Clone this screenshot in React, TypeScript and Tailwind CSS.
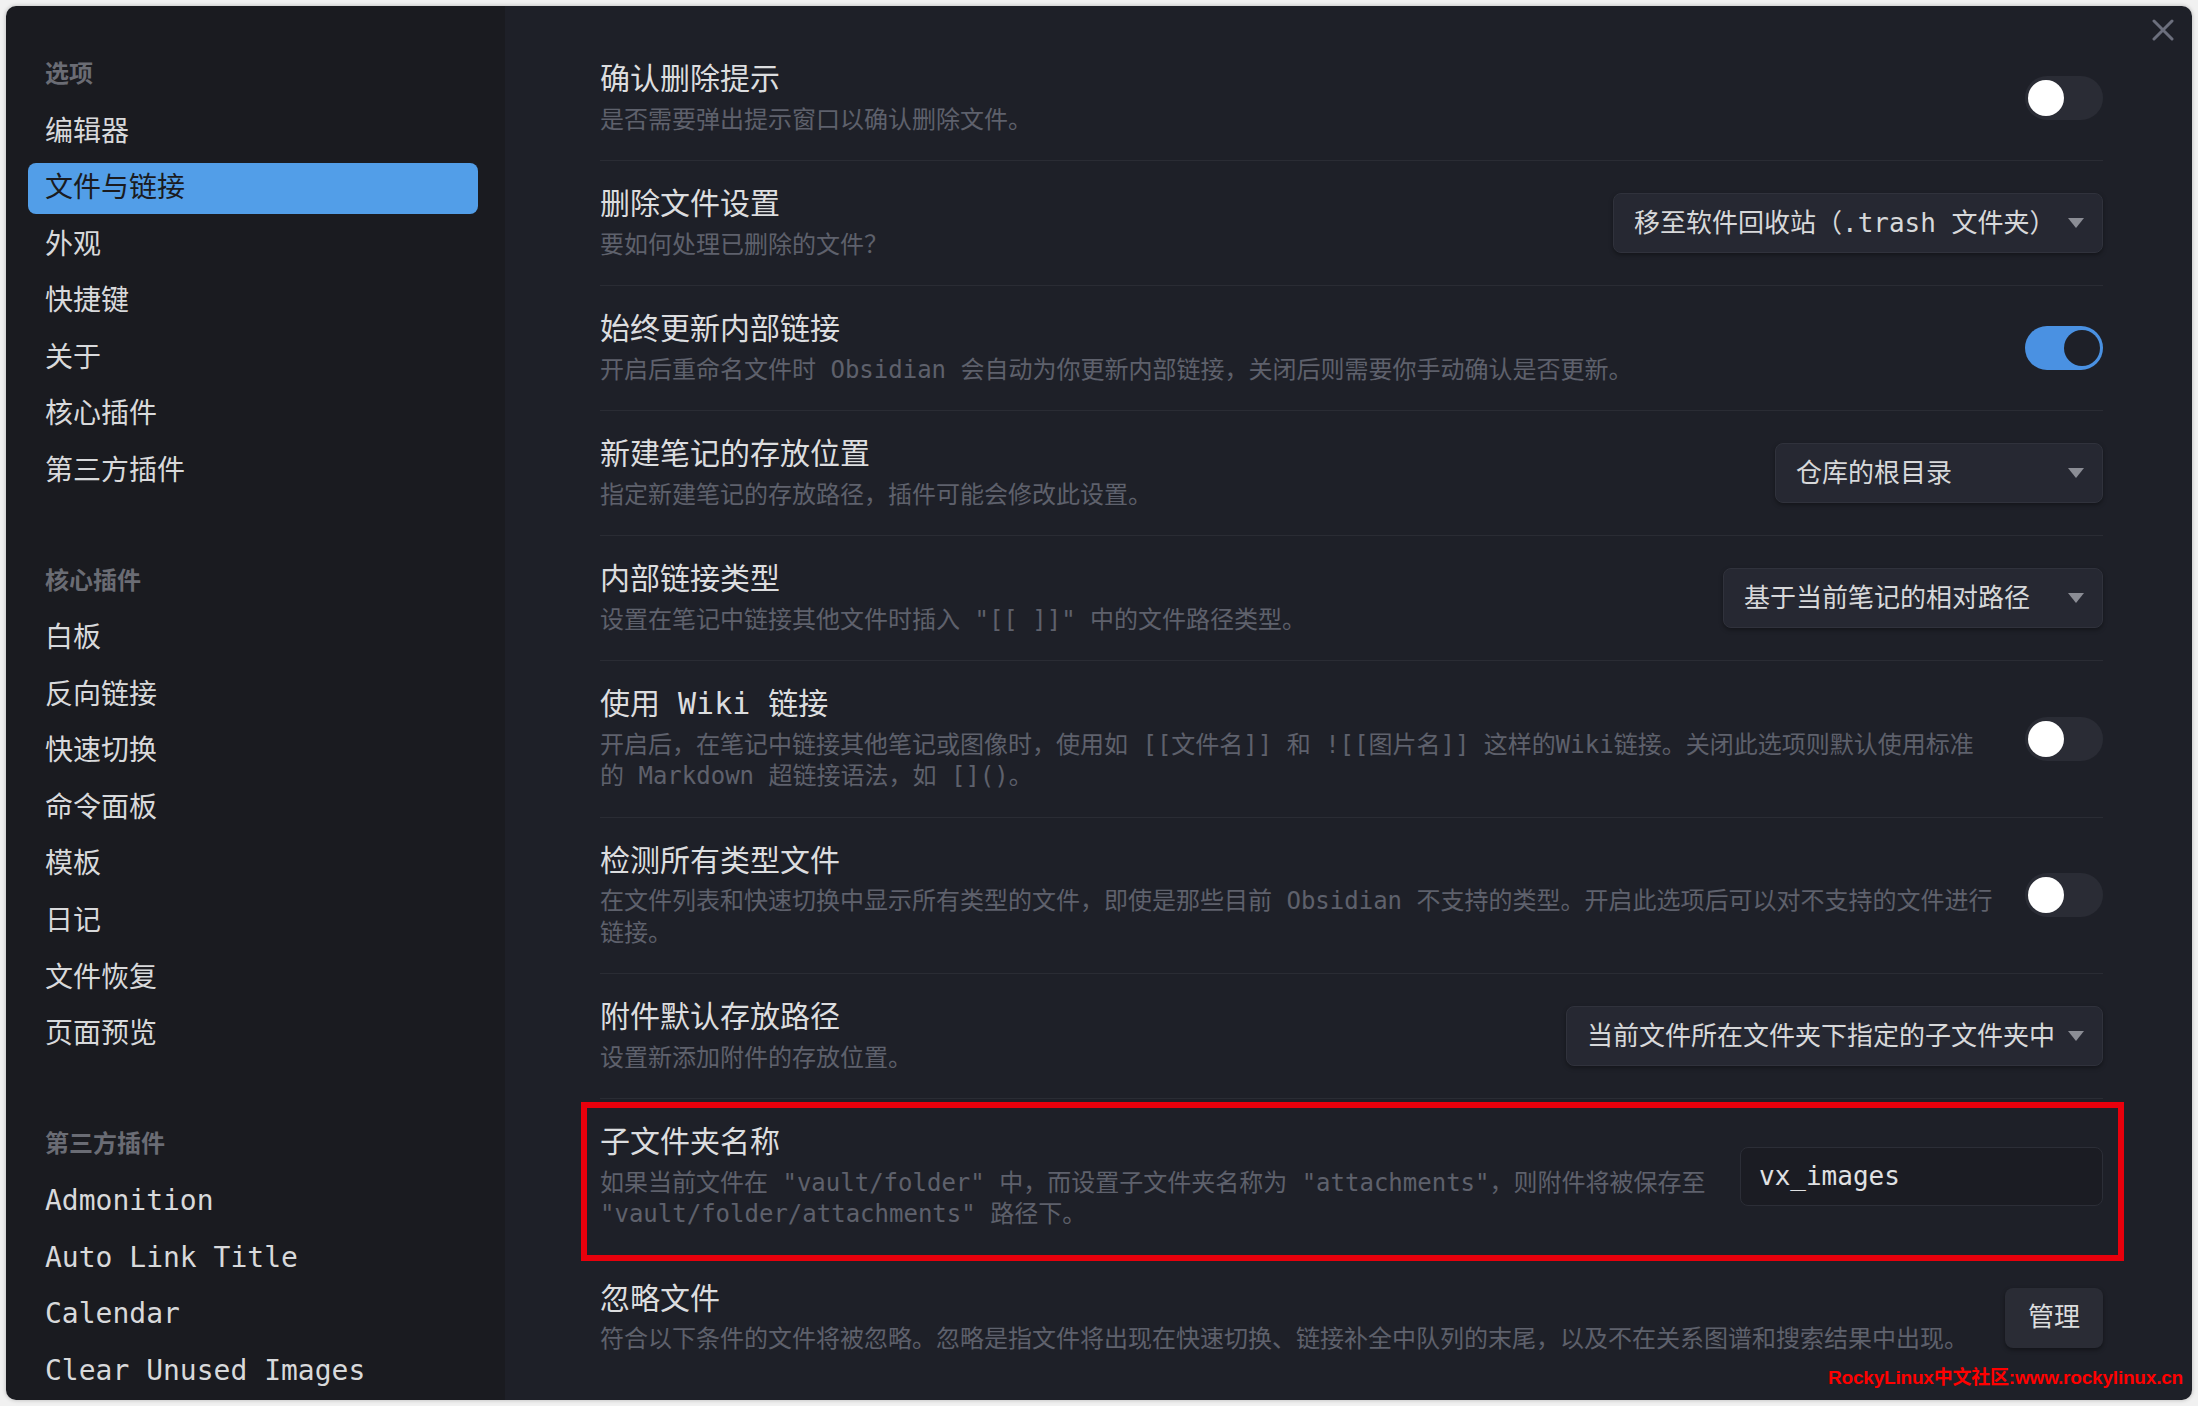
import React from 'react';

const FONT = { fontFamily: '"DejaVu Sans Mono", "Noto Sans CJK SC", monospace' };

type Control =
  | { kind: 'toggle'; on: boolean }
  | { kind: 'select'; value: string; width: string }
  | { kind: 'input'; value: string }
  | { kind: 'button'; label: string };

type Setting = { name: string; desc: string; control: Control };

const settings: Setting[] = [
  { name: '确认删除提示', desc: '是否需要弹出提示窗口以确认删除文件。', control: { kind: 'toggle', on: false } },
  { name: '删除文件设置', desc: '要如何处理已删除的文件？', control: { kind: 'select', value: '移至软件回收站（.trash 文件夹）', width: 'w-[490px]' } },
  { name: '始终更新内部链接', desc: '开启后重命名文件时 Obsidian 会自动为你更新内部链接，关闭后则需要你手动确认是否更新。', control: { kind: 'toggle', on: true } },
  { name: '新建笔记的存放位置', desc: '指定新建笔记的存放路径，插件可能会修改此设置。', control: { kind: 'select', value: '仓库的根目录', width: 'w-[328px]' } },
  { name: '内部链接类型', desc: '设置在笔记中链接其他文件时插入 "[[ ]]" 中的文件路径类型。', control: { kind: 'select', value: '基于当前笔记的相对路径', width: 'w-[380px]' } },
  { name: '使用 Wiki 链接', desc: '开启后，在笔记中链接其他笔记或图像时，使用如 [[文件名]] 和 ![[图片名]] 这样的Wiki链接。关闭此选项则默认使用标准的 Markdown 超链接语法，如 []()。', control: { kind: 'toggle', on: false } },
  { name: '检测所有类型文件', desc: '在文件列表和快速切换中显示所有类型的文件，即使是那些目前 Obsidian 不支持的类型。开启此选项后可以对不支持的文件进行链接。', control: { kind: 'toggle', on: false } },
  { name: '附件默认存放路径', desc: '设置新添加附件的存放位置。', control: { kind: 'select', value: '当前文件所在文件夹下指定的子文件夹中', width: 'w-[537px]' } },
  { name: '子文件夹名称', desc: '如果当前文件在 "vault/folder" 中，而设置子文件夹名称为 "attachments"，则附件将被保存至 "vault/folder/attachments" 路径下。', control: { kind: 'input', value: 'vx_images' } },
  { name: '忽略文件', desc: '符合以下条件的文件将被忽略。忽略是指文件将出现在快速切换、链接补全中队列的末尾，以及不在关系图谱和搜索结果中出现。', control: { kind: 'button', label: '管理' } },
];

const nav = [
  { label: '选项', items: ['编辑器', '文件与链接', '外观', '快捷键', '关于', '核心插件', '第三方插件'] },
  { label: '核心插件', items: ['白板', '反向链接', '快速切换', '命令面板', '模板', '日记', '文件恢复', '页面预览'] },
  { label: '第三方插件', items: ['Admonition', 'Auto Link Title', 'Calendar', 'Clear Unused Images'] },
];

function Toggle({ on }: { on: boolean }) {
  return (
    <div className={`relative w-[78px] h-[44px] rounded-full ${on ? 'bg-[#4a91e2]' : 'bg-[#2a2c35]'}`}>
      <div
        className={`absolute top-[4px] w-[36px] h-[36px] rounded-full ${on ? 'right-[3px] bg-[#1e2028]' : 'left-[3px] bg-white'}`}
      />
    </div>
  );
}

function ControlView({ c }: { c: Control }) {
  if (c.kind === 'toggle') return <Toggle on={c.on} />;
  if (c.kind === 'select') {
    return (
      <div
        className={`${c.width} h-[60px] flex items-center justify-between pl-[20px] pr-[18px] rounded-[8px] bg-[#262832] border border-[#30323c] shadow-[0_2px_4px_rgba(0,0,0,0.35)] text-[26px] text-[#d7d8da] whitespace-nowrap`}
      >
        <span>{c.value}</span>
        <svg width="16" height="10" viewBox="0 0 16 10">
          <polygon points="0,0 16,0 8,10" fill="#8b8d95" />
        </svg>
      </div>
    );
  }
  if (c.kind === 'input') {
    return (
      <div className="w-[363px] h-[59px] flex items-center pl-[18px] rounded-[8px] bg-[#1b1c23] border border-[#2c2e37] text-[26px] text-[#e0e1e3]">
        {c.value}
      </div>
    );
  }
  return (
    <div className="w-[98px] h-[60px] flex items-center justify-center rounded-[8px] bg-[#2a2c35] shadow-[0_2px_4px_rgba(0,0,0,0.4)] text-[26px] text-[#dcddde]">
      {c.label}
    </div>
  );
}

export default function App() {
  return (
    <div className="w-[2198px] h-[1406px] bg-[#f1f1f1] p-[6px]" style={FONT}>
      <div className="relative flex h-full rounded-[10px] overflow-hidden shadow-[0_0_4px_rgba(0,0,0,0.25)]">
        {/* Sidebar */}
        <div className="w-[499px] shrink-0 bg-[#1a1b20] pt-[52px] pl-[22px] pr-[27px]">
          {nav.map((section, si) => (
            <div key={section.label} className={si > 0 ? 'mt-[68px]' : ''}>
              <div className="h-[32px] leading-[32px] pl-[17px] text-[24px] font-bold text-[#6a6c74]">{section.label}</div>
              <div className="mt-[16px] flex flex-col gap-[5.6px]">
                {section.items.map((item) => {
                  const active = si === 0 && item === '文件与链接';
                  return (
                    <div
                      key={item}
                      className={`h-[51px] flex items-center pl-[17px] rounded-[8px] text-[28px] whitespace-nowrap ${
                        active ? 'bg-[#529ee8] text-[#1a1b20]' : 'text-[#d8d9db]'
                      }`}
                    >
                      {item}
                    </div>
                  );
                })}
              </div>
            </div>
          ))}
        </div>

        {/* Settings */}
        <div className="flex-1 bg-[#1e2028] pl-[95px] pr-[89px] pt-[30px]">
          {settings.map((s, i) => (
            <div
              key={s.name}
              className={`flex items-center py-[24px] ${i > 0 ? 'border-t border-[#2a2c34]' : ''}`}
            >
              <div className="flex-1 min-w-0">
                <div className="text-[30px] leading-[38.5px] text-[#dcdddf] whitespace-pre">{s.name}</div>
                <div className="mt-[6px] text-[24px] leading-[31.5px] text-[#5e616c]">{s.desc}</div>
              </div>
              <div className="ml-[30px] shrink-0">
                <ControlView c={s.control} />
              </div>
            </div>
          ))}
        </div>

        {/* close button */}
        <div className="absolute top-[13px] right-[18px]">
          <svg width="22" height="22" viewBox="0 0 22 22">
            <path d="M2 2 L20 20 M20 2 L2 20" stroke="#6c6f7d" strokeWidth="3" strokeLinecap="round" />
          </svg>
        </div>

        {/* annotation box */}
        <div className="absolute left-[575px] top-[1096px] w-[1543px] h-[159px] border-[6px] border-[#e8000c]" />

        {/* watermark */}
        <div
          className="absolute right-[9px] top-[1360px] text-[19px] leading-[23px] font-bold text-[#ff0000] tracking-[-0.2px]"
          style={{ fontFamily: '"Liberation Sans", "Noto Sans CJK SC", sans-serif' }}
        >
          RockyLinux中文社区:www.rockylinux.cn
        </div>
      </div>
    </div>
  );
}
